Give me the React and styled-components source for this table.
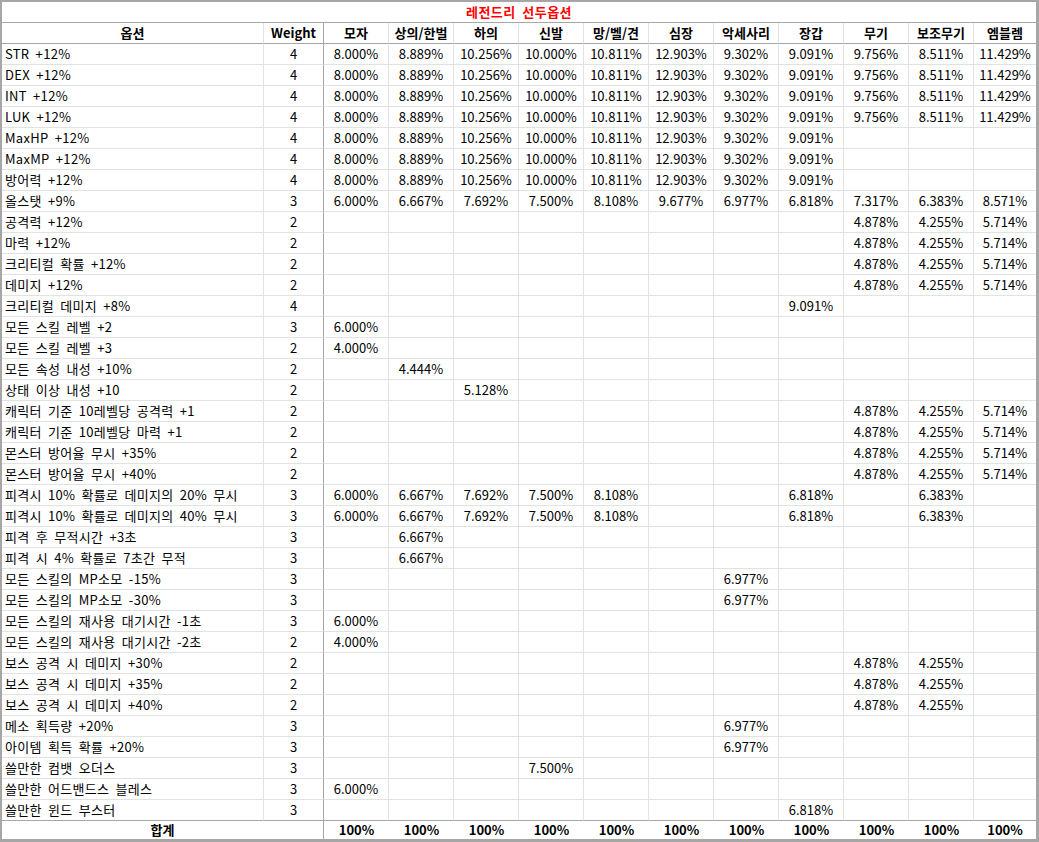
import React from 'react'
import styled, { createGlobalStyle } from 'styled-components'

const GlobalStyle = createGlobalStyle`
  html, body {
    margin: 0;
    padding: 0;
    background: #ffffff;
  }
  body {
    font-family: "Noto Sans CJK KR", "Noto Sans", sans-serif;
    font-size: 13px;
    color: #000000;
  }
`

const COLUMNS = ['모자', '상의/한벌', '하의', '신발', '망/벨/견', '심장', '악세사리', '장갑', '무기', '보조무기', '엠블렘']

const ALL = ['8.000%', '8.889%', '10.256%', '10.000%', '10.811%', '12.903%', '9.302%', '9.091%', '9.756%', '8.511%', '11.429%']
const ARMOR = ['8.000%', '8.889%', '10.256%', '10.000%', '10.811%', '12.903%', '9.302%', '9.091%', '', '', '']
const ALLSTAT = ['6.000%', '6.667%', '7.692%', '7.500%', '8.108%', '9.677%', '6.977%', '6.818%', '7.317%', '6.383%', '8.571%']
const WEAPON = ['', '', '', '', '', '', '', '', '4.878%', '4.255%', '5.714%']
const BOSS = ['', '', '', '', '', '', '', '', '4.878%', '4.255%', '']
const GUARD = ['6.000%', '6.667%', '7.692%', '7.500%', '8.108%', '', '', '6.818%', '', '6.383%', '']

// one value in a single column, the rest empty
const only = (index, value) => COLUMNS.map((_, i) => (i === index ? value : ''))

const ROWS = [
  ['STR +12%', 4, ALL],
  ['DEX +12%', 4, ALL],
  ['INT +12%', 4, ALL],
  ['LUK +12%', 4, ALL],
  ['MaxHP +12%', 4, ARMOR],
  ['MaxMP +12%', 4, ARMOR],
  ['방어력 +12%', 4, ARMOR],
  ['올스탯 +9%', 3, ALLSTAT],
  ['공격력 +12%', 2, WEAPON],
  ['마력 +12%', 2, WEAPON],
  ['크리티컬 확률 +12%', 2, WEAPON],
  ['데미지 +12%', 2, WEAPON],
  ['크리티컬 데미지 +8%', 4, only(7, '9.091%')],
  ['모든 스킬 레벨 +2', 3, only(0, '6.000%')],
  ['모든 스킬 레벨 +3', 2, only(0, '4.000%')],
  ['모든 속성 내성 +10%', 2, only(1, '4.444%')],
  ['상태 이상 내성 +10', 2, only(2, '5.128%')],
  ['캐릭터 기준 10레벨당 공격력 +1', 2, WEAPON],
  ['캐릭터 기준 10레벨당 마력 +1', 2, WEAPON],
  ['몬스터 방어율 무시 +35%', 2, WEAPON],
  ['몬스터 방어율 무시 +40%', 2, WEAPON],
  ['피격시 10% 확률로 데미지의 20% 무시', 3, GUARD],
  ['피격시 10% 확률로 데미지의 40% 무시', 3, GUARD],
  ['피격 후 무적시간 +3초', 3, only(1, '6.667%')],
  ['피격 시 4% 확률로 7초간 무적', 3, only(1, '6.667%')],
  ['모든 스킬의 MP소모 -15%', 3, only(6, '6.977%')],
  ['모든 스킬의 MP소모 -30%', 3, only(6, '6.977%')],
  ['모든 스킬의 재사용 대기시간 -1초', 3, only(0, '6.000%')],
  ['모든 스킬의 재사용 대기시간 -2초', 2, only(0, '4.000%')],
  ['보스 공격 시 데미지 +30%', 2, BOSS],
  ['보스 공격 시 데미지 +35%', 2, BOSS],
  ['보스 공격 시 데미지 +40%', 2, BOSS],
  ['메소 획득량 +20%', 3, only(6, '6.977%')],
  ['아이템 획득 확률 +20%', 3, only(6, '6.977%')],
  ['쓸만한 컴뱃 오더스', 3, only(3, '7.500%')],
  ['쓸만한 어드밴드스 블레스', 3, only(0, '6.000%')],
  ['쓸만한 윈드 부스터', 3, only(7, '6.818%')],
]

const GRID = '262px 60px repeat(10, 65px) 62px'

const Sheet = styled.div`
  box-sizing: border-box;
  width: 1039px;
  height: 842px;
  border-style: solid;
  border-color: #a6a6a6;
  border-width: 2px 3px 3px 2px;
  display: flex;
  flex-direction: column;
  overflow: hidden;
`

const TitleBar = styled.div`
  box-sizing: border-box;
  height: 21px;
  border-bottom: 1px solid #a6a6a6;
  display: flex;
  align-items: center;
  justify-content: center;
  color: #ff0000;
  font-weight: 700;
  line-height: 20px;
  letter-spacing: 0.5px;
  word-spacing: 3px;
`

const Row = styled.div`
  display: grid;
  grid-template-columns: ${GRID};
  height: ${p => p.$height || 21}px;
`

const Cell = styled.div`
  box-sizing: border-box;
  display: flex;
  align-items: center;
  justify-content: ${p => (p.$left ? 'flex-start' : 'center')};
  padding: ${p => (p.$left ? '0 0 0 3px' : '0')};
  border-bottom: 1px solid ${p => (p.$strongBottom ? '#a6a6a6' : '#e2e2e2')};
  border-right: ${p =>
    p.$last ? 'none' : `1px solid ${p.$strongRight ? '#a6a6a6' : '#e2e2e2'}`};
  font-weight: ${p => (p.$bold ? 700 : 400)};
  line-height: 20px;
  white-space: nowrap;
  overflow: hidden;
  grid-column: ${p => p.$span || 'auto'};
`

const NameCell = styled(Cell)`
  letter-spacing: 0.3px;
  word-spacing: 3px;
`

const TotalCell = styled(Cell)`
  border-bottom: none;
  border-right: ${p => (p.$strongRight ? '1px solid #a6a6a6' : 'none')};
  font-weight: 700;
`

const DataRow = ({ name, weight, values, isLast }) => (
  <Row>
    <NameCell $left $strongBottom={isLast}>{name}</NameCell>
    <Cell $strongRight $strongBottom={isLast}>{weight}</Cell>
    {values.map((v, i) => (
      <Cell key={i} $last={i === values.length - 1} $strongBottom={isLast}>
        {v}
      </Cell>
    ))}
  </Row>
)

export default function App() {
  return (
    <>
      <GlobalStyle />
      <Sheet>
        <TitleBar>레전드리 선두옵션</TitleBar>
        <Row>
          <Cell $bold $strongBottom>옵션</Cell>
          <Cell $bold $strongBottom $strongRight>Weight</Cell>
          {COLUMNS.map((c, i) => (
            <Cell key={c} $bold $strongBottom $last={i === COLUMNS.length - 1}>
              {c}
            </Cell>
          ))}
        </Row>
        {ROWS.map(([name, weight, values], i) => (
          <DataRow
            key={name}
            name={name}
            weight={weight}
            values={values}
            isLast={i === ROWS.length - 1}
          />
        ))}
        <Row $height={18}>
          <TotalCell $span="1 / 3" $strongRight>합계</TotalCell>
          {COLUMNS.map(c => (
            <TotalCell key={c}>100%</TotalCell>
          ))}
        </Row>
      </Sheet>
    </>
  )
}
